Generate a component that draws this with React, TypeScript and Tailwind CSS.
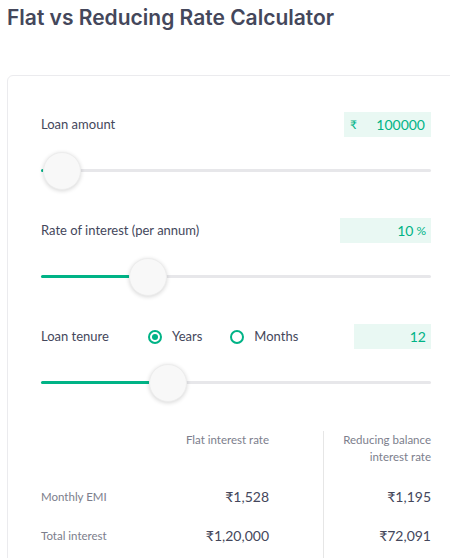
import React from 'react'

const LABEL = 'text-[13px] text-[#44475b]'

function Slider({ fill }: { fill: number }) {
  // fill = px of green track before the thumb
  return (
    <div className="relative mt-[15px] h-[38px]">
      <div className="absolute left-0 right-0 top-[17px] h-[3px] rounded-full bg-[#e7e7ea]" />
      <div className="absolute left-0 top-[17px] h-[3px] rounded-full bg-[#00b386]" style={{ width: fill }} />
      <div
        className="absolute top-0 h-[38px] w-[38px] rounded-full border border-[#ededed] bg-[#f8f8f8] shadow-[0_1px_4px_rgba(0,0,0,0.16)]"
        style={{ left: fill - 1 }}
      />
    </div>
  )
}

function Radio({ checked, label }: { checked: boolean; label: string }) {
  return (
    <div className="flex items-center gap-[10px]">
      <span className="flex h-[14px] w-[14px] items-center justify-center rounded-full border-2 border-[#00b386]">
        {checked && <span className="h-[6px] w-[6px] rounded-full bg-[#00b386]" />}
      </span>
      <span className={LABEL}>{label}</span>
    </div>
  )
}

export default function App() {
  return (
    <div
      className="h-[558px] w-[450px] overflow-hidden bg-white"
      style={{ fontFamily: 'Lato, "Noto Sans", sans-serif' }}
    >
      <h1
        className="pl-[7px] pt-[4px] text-[21px] font-semibold leading-[28px] text-[#44475b]"
        style={{ fontFamily: 'Inter, sans-serif' }}
      >
        Flat vs Reducing Rate Calculator
      </h1>

      <div className="ml-[7px] mt-[43px] w-[470px] rounded-[6px] border border-[#ebebee] pb-[40px] pl-[33px] pt-[36px]">
        <div className="w-[390px]">
          {/* loan amount */}
          <div className="flex h-[25px] items-center justify-between">
            <span className={LABEL}>Loan amount</span>
            <div className="flex h-[25px] w-[87px] items-center justify-between bg-[#e9f8f3] px-[6px] text-[14px] text-[#00b386]">
              <span className="text-[12px]">₹</span>
              <span>100000</span>
            </div>
          </div>
          <Slider fill={3} />

          {/* rate */}
          <div className="mt-[28px] flex h-[25px] items-center justify-between">
            <span className={LABEL}>Rate of interest (per annum)</span>
            <div className="flex h-[25px] w-[91px] items-center justify-end bg-[#e9f8f3] px-[5px] text-[14px] text-[#00b386]">
              10<span className="ml-[3px] text-[12px]">%</span>
            </div>
          </div>
          <Slider fill={89} />

          {/* tenure */}
          <div className="mt-[28px] flex h-[25px] items-center justify-between">
            <div className="flex items-center">
              <span className={`${LABEL} w-[107px]`}>Loan tenure</span>
              <Radio checked label="Years" />
              <div className="ml-[28px]">
                <Radio checked={false} label="Months" />
              </div>
            </div>
            <div className="flex h-[25px] w-[77px] items-center justify-end bg-[#e9f8f3] px-[5px] text-[14px] text-[#00b386]">
              12
            </div>
          </div>
          <Slider fill={109} />

          {/* results */}
          <div className="mt-[29px] flex">
            <div className="w-[110px]">
              <div className="h-[34px]" />
              <div className="mt-[22px] flex h-[20px] items-center text-[11.5px] text-[#7c7e8c]">Monthly EMI</div>
              <div className="mt-[19px] flex h-[20px] items-center text-[11.5px] text-[#7c7e8c]">Total interest</div>
            </div>
            <div className="w-[118px] text-right">
              <div className="h-[34px] text-[11.5px] leading-[17px] text-[#7c7e8c]">Flat interest rate</div>
              <div className="mt-[22px] h-[20px] text-[14px] leading-[20px] text-[#44475b]">₹1,528</div>
              <div className="mt-[19px] h-[20px] text-[14px] leading-[20px] text-[#44475b]">₹1,20,000</div>
            </div>
            <div className="ml-[54px] w-[108px] border-l border-[#e6e6e6] pb-[40px] text-right">
              <div className="h-[34px] text-[11.5px] leading-[17px] text-[#7c7e8c]">
                Reducing balance
                <br />
                interest rate
              </div>
              <div className="mt-[22px] h-[20px] text-[14px] leading-[20px] text-[#44475b]">₹1,195</div>
              <div className="mt-[19px] h-[20px] text-[14px] leading-[20px] text-[#44475b]">₹72,091</div>
            </div>
          </div>
        </div>
      </div>
    </div>
  )
}
